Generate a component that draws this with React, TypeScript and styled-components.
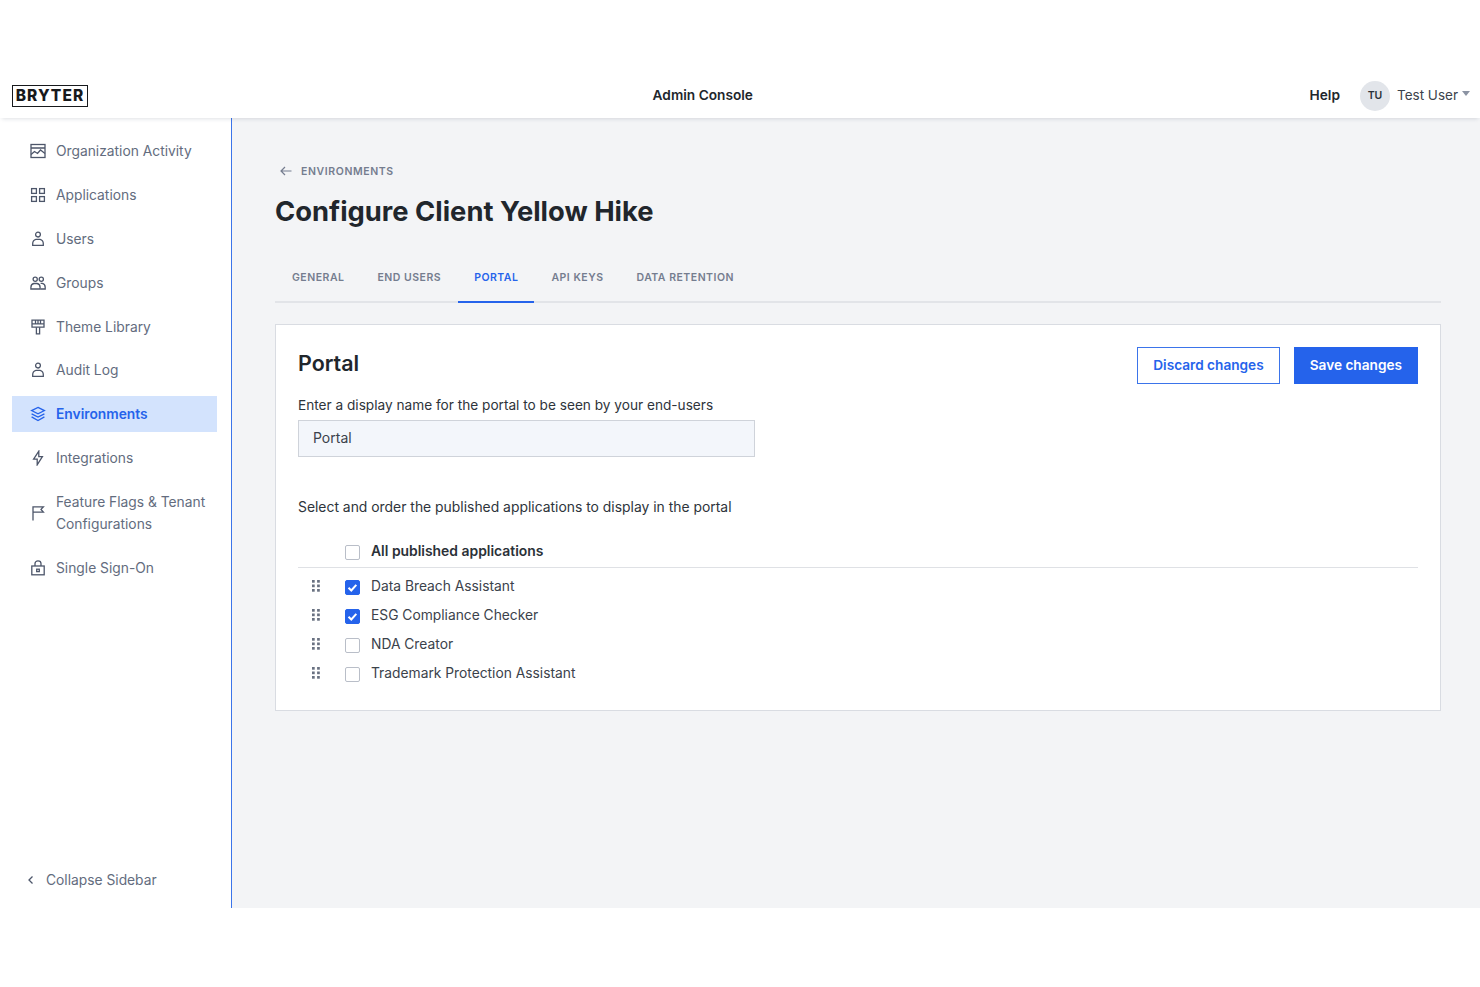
import React from 'react';
import styled, { createGlobalStyle } from 'styled-components';

const GlobalStyle = createGlobalStyle`
  html, body {
    margin: 0;
    padding: 0;
    background: #fff;
    font-family: Inter, "Liberation Sans", sans-serif;
    color: #21262c;
  }
  * { box-sizing: border-box; }
`;

const Page = styled.div`
  height: 987px;
  padding: 73px 0 79px;
  display: flex;
  flex-direction: column;
  background: #fff;
  overflow: hidden;
`;

const Header = styled.header`
  height: 45px;
  flex: none;
  display: flex;
  align-items: center;
  justify-content: space-between;
  padding: 0 10px 2px 12px;
  background: #fff;
  box-shadow: 0 3px 4px -2px rgba(30, 40, 70, 0.14);
  position: relative;
  z-index: 1;
`;

const Logo = styled.div`
  width: 76px;
  height: 22px;
  margin-top: 2px;
  border: 1.5px solid #17191c;
  display: flex;
  align-items: center;
  justify-content: center;
  font-size: 15.5px;
  font-weight: 800;
  letter-spacing: 1.1px;
  color: #17191c;
`;

const HeaderTitle = styled.div`
  margin-left: 8px;
  font-size: 13.7px;
  font-weight: 600;
  color: #21262c;
`;

const HeaderRight = styled.div`
  display: flex;
  align-items: center;
`;

const Help = styled.span`
  font-size: 13.7px;
  font-weight: 600;
  margin-right: 20px;
`;

const Avatar = styled.span`
  width: 30px;
  height: 30px;
  border-radius: 50%;
  margin: 2px 7px 0 0;
  background: #e2e5ea;
  display: flex;
  align-items: center;
  justify-content: center;
  font-size: 10.5px;
  font-weight: 600;
  color: #2b3138;
`;

const UserName = styled.span`
  font-size: 13.5px;
  color: #3b424b;
`;

const Caret = styled.span`
  width: 0;
  height: 0;
  margin: 0 0 3px 4px;
  border-left: 4px solid transparent;
  border-right: 4px solid transparent;
  border-top: 5px solid #8b93a3;
`;

const Body = styled.div`
  flex: 1;
  min-height: 0;
  display: flex;
`;

const Sidebar = styled.nav`
  width: 232px;
  flex: none;
  display: flex;
  flex-direction: column;
  gap: 7.9px;
  padding: 15px 14px 17px 12px;
  background: #fff;
  border-right: 1px solid #3b74ea;
  box-shadow: 1px 0 0 #c9d6f2;
`;

const NavItem = styled.a<{ $active?: boolean }>`
  display: flex;
  align-items: center;
  gap: 10px;
  padding: 7px 6px 7px 18px;
  font-size: 13.8px;
  line-height: 22px;
  font-weight: ${({ $active }) => ($active ? 600 : 400)};
  color: ${({ $active }) => ($active ? '#2563eb' : '#636c7e')};
  background: ${({ $active }) => ($active ? '#d3e3fd' : 'transparent')};
`;

const NavIcon = styled.svg<{ $active?: boolean }>`
  width: 16px;
  height: 16px;
  flex: none;
  fill: none;
  stroke: ${({ $active }) => ($active ? '#2563eb' : '#4d566a')};
  stroke-width: 1.3;
`;

const Collapse = styled.a`
  margin-top: auto;
  display: flex;
  align-items: center;
  gap: 11px;
  padding-left: 15px;
  font-size: 13.8px;
  line-height: 22px;
  color: #636c7e;
`;

const Main = styled.main`
  flex: 1;
  min-width: 0;
  padding: 44px 39px 0 43px;
  background: #f3f4f6;
`;

const BackLink = styled.a`
  display: flex;
  align-items: center;
  gap: 9px;
  height: 18px;
  padding-left: 5px;
  font-size: 10.5px;
  font-weight: 600;
  letter-spacing: 0.6px;
  color: #757d8f;
`;

const PageTitle = styled.h1`
  margin: 13px 0 0;
  font-size: 27.35px;
  line-height: 38px;
  font-weight: 700;
  color: #21262c;
`;

const Tabs = styled.div`
  margin-top: 24px;
  padding-left: 1px;
  display: flex;
  gap: 1px;
  border-bottom: 2px solid #e2e4e8;
`;

const Tab = styled.a<{ $active?: boolean }>`
  height: 48px;
  margin-bottom: -2px;
  padding: 0 16px 2px;
  display: flex;
  align-items: center;
  font-size: 10.5px;
  font-weight: 600;
  letter-spacing: 0.5px;
  color: ${({ $active }) => ($active ? '#2563eb' : '#757d8f')};
  border-bottom: 2px solid ${({ $active }) => ($active ? '#2563eb' : 'transparent')};
`;

const Card = styled.section`
  margin-top: 21px;
  height: 387px;
  padding: 22px;
  background: #fff;
  border: 1px solid #d9dce2;
`;

const CardHead = styled.div`
  display: flex;
  align-items: flex-start;
  justify-content: space-between;
  height: 37px;
`;

const CardTitle = styled.h2`
  margin: 0;
  font-size: 21.4px;
  line-height: 32px;
  font-weight: 600;
  color: #21262c;
`;

const Actions = styled.div`
  display: flex;
  gap: 14px;
`;

const Button = styled.button<{ $primary?: boolean }>`
  height: 37px;
  padding: 0 15px 2px;
  font: 600 13.65px Inter, "Liberation Sans", sans-serif;
  border: 1px solid ${({ $primary }) => ($primary ? '#2563eb' : '#3b74ea')};
  color: ${({ $primary }) => ($primary ? '#fff' : '#2563eb')};
  background: ${({ $primary }) => ($primary ? '#2563eb' : '#fff')};
`;

const FieldLabel = styled.div`
  margin-top: 10px;
  font-size: 13.65px;
  line-height: 22px;
  color: #2e343b;
`;

const TextInput = styled.div`
  width: 457px;
  height: 37px;
  margin-top: 4px;
  padding: 0 14px 3px;
  display: flex;
  align-items: center;
  font-size: 14px;
  color: #3b424b;
  background: #f3f6fb;
  border: 1px solid #cfd3da;
`;

const SectionLabel = styled(FieldLabel)`
  margin-top: 39px;
  font-size: 13.9px;
`;

const AllRow = styled.div`
  margin-top: 22px;
  height: 28px;
  padding-bottom: 5px;
  display: flex;
  align-items: center;
  padding-left: 47px;
  gap: 11px;
  border-bottom: 1px solid #dfe1e5;
  font-size: 13.9px;
  font-weight: 600;
  color: #2b3138;
`;

const AppRow = styled.div`
  height: 29px;
  display: flex;
  align-items: center;
  font-size: 13.8px;
  color: #3b424b;
`;

const AppList = styled.div`
  margin-top: 3px;
`;

const Handle = styled.svg`
  width: 8px;
  height: 14px;
  margin: 0 25px 0 14px;
  flex: none;
  fill: #697181;
`;

const Box = styled.span<{ $checked?: boolean }>`
  width: 15px;
  height: 15px;
  margin-top: 3px;
  flex: none;
  border-radius: 2px;
  display: flex;
  align-items: center;
  justify-content: center;
  background: ${({ $checked }) => ($checked ? '#2563eb' : '#fff')};
  border: 1px solid ${({ $checked }) => ($checked ? '#2563eb' : '#b9bec8')};
`;

const AppName = styled.span`
  margin-left: 11px;
`;

const icons: Record<string, React.ReactNode> = {
  activity: (
    <>
      <rect x="1" y="1.5" width="14" height="13" />
      <path d="M1 5h14M1 11.5l3.5-3 3 2 3-3.5 4.5 3.5" />
    </>
  ),
  grid: (
    <>
      <rect x="1.6" y="1.6" width="4.8" height="4.8" />
      <rect x="9.6" y="1.6" width="4.8" height="4.8" />
      <rect x="1.6" y="9.6" width="4.8" height="4.8" />
      <rect x="9.6" y="9.6" width="4.8" height="4.8" />
    </>
  ),
  user: (
    <>
      <circle cx="8" cy="3.6" r="2.4" />
      <path d="M2.7 14.3v-1.6c0-2.2 1.5-4 3.2-4.4h4.2c1.7.4 3.2 2.2 3.2 4.4v1.6z" />
    </>
  ),
  group: (
    <>
      <circle cx="5.2" cy="4.2" r="2.1" />
      <circle cx="11.3" cy="4.2" r="2.1" />
      <path d="M.9 14v-1.6c0-2 1.4-3.6 3-3.9h3.2c1.7.3 3 1.9 3 3.9V14z" />
      <path d="M10.6 8.4h1.6c1.7.3 3 1.9 3 3.9V14h-4.6" />
    </>
  ),
  theme: (
    <>
      <path d="M2 1.2h12v7H2zM2 4.8h12M5.5 1.2v3.6M8 1.2v3.6M10.5 1.2v3.6" />
      <path d="M6.4 8.2v6.6h3.2V8.2" />
    </>
  ),
  layers: (
    <>
      <path d="M8 1.4l6.4 3.2L8 7.8 1.6 4.6z" />
      <path d="M1.6 7.8L8 11l6.4-3.2M1.6 10.9L8 14.6l6.4-3.7" />
    </>
  ),
  bolt: <path d="M8.8 1.2v5.4h3.6l-5.2 8.2V9.2H3.6z" />,
  flag: <path d="M3 15.5V1.8h10.4l-2.4 2.6 2.4 2.8H3" />,
  lock: (
    <>
      <rect x="1.8" y="6" width="12.4" height="8.8" />
      <path d="M5 6V3.6C5 2 6.3.9 8 .9s3 1.1 3 2.7V6" />
      <rect x="6.7" y="9.2" width="2.6" height="2.4" />
    </>
  ),
};

const navItems = [
  { label: 'Organization Activity', icon: 'activity' },
  { label: 'Applications', icon: 'grid' },
  { label: 'Users', icon: 'user' },
  { label: 'Groups', icon: 'group' },
  { label: 'Theme Library', icon: 'theme' },
  { label: 'Audit Log', icon: 'user' },
  { label: 'Environments', icon: 'layers', active: true },
  { label: 'Integrations', icon: 'bolt' },
  { label: 'Feature Flags & Tenant Configurations', icon: 'flag' },
  { label: 'Single Sign-On', icon: 'lock' },
];

const tabs = ['General', 'End Users', 'Portal', 'API Keys', 'Data Retention'];

const apps = [
  { name: 'Data Breach Assistant', checked: true },
  { name: 'ESG Compliance Checker', checked: true },
  { name: 'NDA Creator', checked: false },
  { name: 'Trademark Protection Assistant', checked: false },
];

function DragHandle() {
  return (
    <Handle viewBox="0 0 8 14">
      {[1, 5.5, 10].map((y) => (
        <React.Fragment key={y}>
          <rect x="0" y={y} width="2.7" height="2.7" />
          <rect x="5.1" y={y} width="2.7" height="2.7" />
        </React.Fragment>
      ))}
    </Handle>
  );
}

function CheckBox({ checked }: { checked?: boolean }) {
  return (
    <Box $checked={checked}>
      {checked && (
        <svg width="11" height="11" viewBox="0 0 11 11" fill="none" stroke="#fff" strokeWidth="2">
          <path d="M1.5 5.8l2.8 2.7 5-5.6" />
        </svg>
      )}
    </Box>
  );
}

export default function App() {
  return (
    <>
      <GlobalStyle />
      <Page>
        <Header>
          <Logo>BRYTER</Logo>
          <HeaderTitle>Admin Console</HeaderTitle>
          <HeaderRight>
            <Help>Help</Help>
            <Avatar>TU</Avatar>
            <UserName>Test User</UserName>
            <Caret />
          </HeaderRight>
        </Header>
        <Body>
          <Sidebar>
            {navItems.map((item) => (
              <NavItem key={item.label} $active={item.active}>
                <NavIcon viewBox="0 0 16 16" $active={item.active}>
                  {icons[item.icon]}
                </NavIcon>
                <span>{item.label}</span>
              </NavItem>
            ))}
            <Collapse>
              <svg width="8" height="10" viewBox="0 0 8 10" fill="none" stroke="#4d566a" strokeWidth="1.3">
                <path d="M5.5 1.5L2 5l3.5 3.5" />
              </svg>
              <span>Collapse Sidebar</span>
            </Collapse>
          </Sidebar>
          <Main>
            <BackLink>
              <svg width="12" height="10" viewBox="0 0 12 10" fill="none" stroke="#757d8f" strokeWidth="1.2">
                <path d="M11.5 5H1M5 1L1 5l4 4" />
              </svg>
              ENVIRONMENTS
            </BackLink>
            <PageTitle>Configure Client Yellow Hike</PageTitle>
            <Tabs>
              {tabs.map((tab) => (
                <Tab key={tab} $active={tab === 'Portal'}>
                  {tab.toUpperCase()}
                </Tab>
              ))}
            </Tabs>
            <Card>
              <CardHead>
                <CardTitle>Portal</CardTitle>
                <Actions>
                  <Button>Discard changes</Button>
                  <Button $primary>Save changes</Button>
                </Actions>
              </CardHead>
              <FieldLabel>Enter a display name for the portal to be seen by your end-users</FieldLabel>
              <TextInput>Portal</TextInput>
              <SectionLabel>Select and order the published applications to display in the portal</SectionLabel>
              <AllRow>
                <CheckBox />
                All published applications
              </AllRow>
              <AppList>
                {apps.map((app) => (
                  <AppRow key={app.name}>
                    <DragHandle />
                    <CheckBox checked={app.checked} />
                    <AppName>{app.name}</AppName>
                  </AppRow>
                ))}
              </AppList>
            </Card>
          </Main>
        </Body>
      </Page>
    </>
  );
}
